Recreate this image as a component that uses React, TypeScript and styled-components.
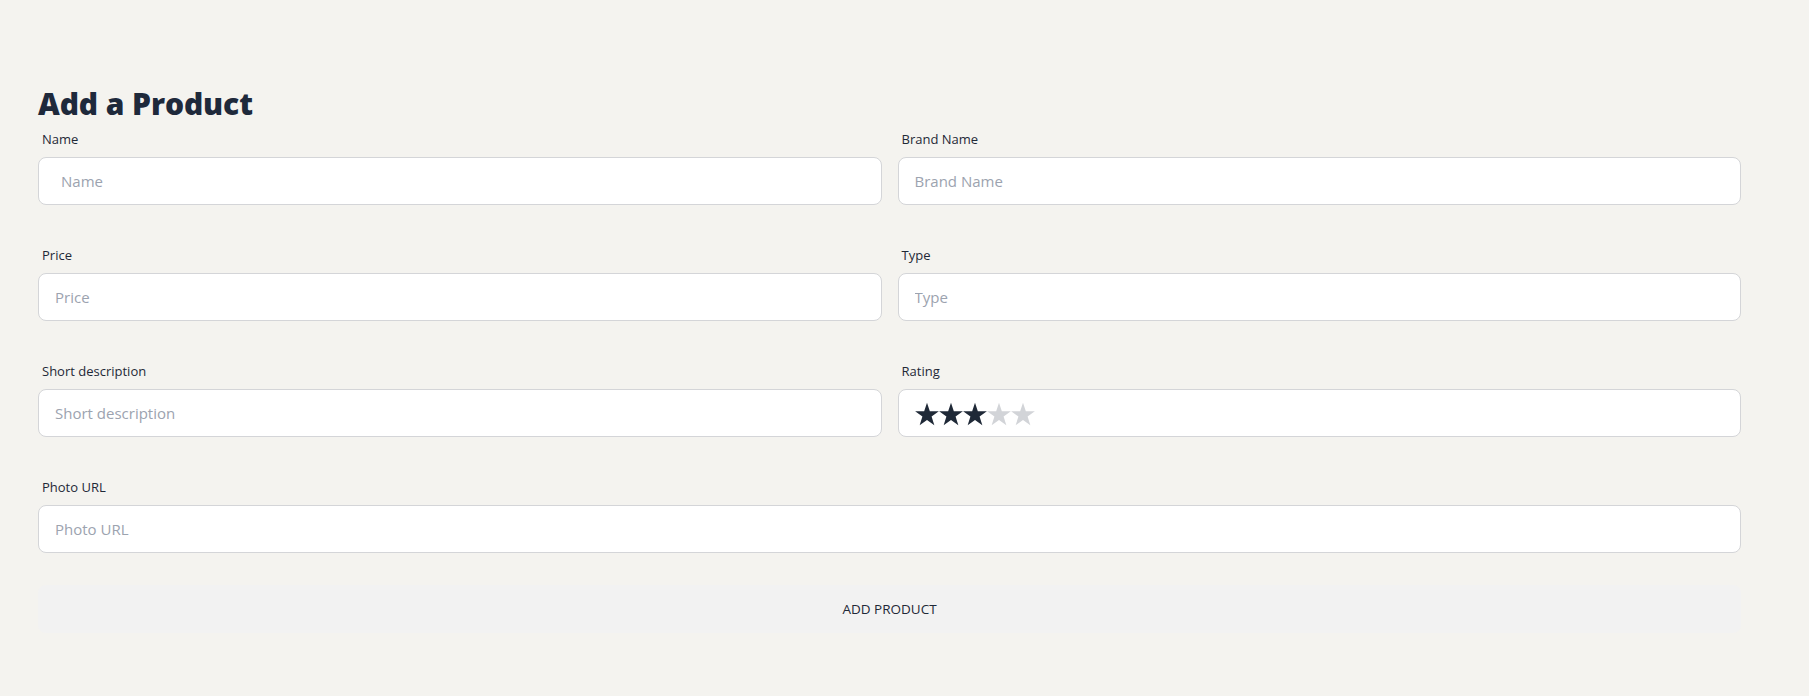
import React from "react";
import styled, { createGlobalStyle } from "styled-components";

const Global = createGlobalStyle`
  html, body { margin: 0; padding: 0; background: #f4f3ef; }
  body { font-family: "Open Sans", "Noto Sans", sans-serif; color: #1f2937; }
  * { box-sizing: border-box; }
`;

const Page = styled.div`
  padding: 86px 68px 60px 38px;
`;

const Title = styled.h1`
  margin: 0;
  font-family: "Open Sans", "Noto Sans", sans-serif;
  font-weight: 800;
  font-size: 30px;
  line-height: 35px;
  letter-spacing: -0.1px;
  color: #1e293b;
`;

const Grid = styled.form`
  display: grid;
  grid-template-columns: 1fr 1fr;
  column-gap: 16px;
  row-gap: 32px;
`;

const Field = styled.div<{ $wide?: boolean }>`
  display: flex;
  flex-direction: column;
  grid-column: ${(p) => (p.$wide ? "1 / -1" : "auto")};
`;

const Label = styled.label`
  padding: 8px 4px;
  font-size: 13px;
  line-height: 20px;
  color: #1f2937;
`;

const Input = styled.input<{ $pad?: number }>`
  height: 48px;
  width: 100%;
  padding: 0 16px 0 ${(p) => p.$pad ?? 16}px;
  border: 1px solid #d4d5d8;
  border-radius: 8px;
  background: #ffffff;
  font-family: "Open Sans", "Noto Sans", sans-serif;
  font-size: 15px;
  color: #1f2937;
  outline: none;
  &::placeholder { color: #9ca3af; }
`;

const RatingBox = styled.div`
  height: 48px;
  display: flex;
  align-items: center;
  padding: 2px 16px 0 16px;
  border: 1px solid #d4d5d8;
  border-radius: 8px;
  background: #ffffff;
`;

const StarSvg = styled.svg<{ $on: boolean }>`
  width: 24px;
  height: 24px;
  display: block;
  fill: ${(p) => (p.$on ? "#1f2937" : "#d2d4d8")};
`;

const Button = styled.button`
  grid-column: 1 / -1;
  height: 48px;
  border: none;
  border-radius: 8px;
  background: #f2f2f2;
  font-family: "Open Sans", "Noto Sans", sans-serif;
  font-size: 13.5px;
  font-weight: 500;
  text-transform: uppercase;
  color: #1f2937;
  cursor: pointer;
`;

const Star = ({ on }: { on: boolean }) => (
  <StarSvg $on={on} viewBox="0 0 192 180">
    <path d="m96 137.263-58.779 42.024 22.163-68.389L.894 68.481l72.476-.243L96 0l22.63 68.238 72.476.243-58.49 42.417 22.163 68.389z" />
  </StarSvg>
);

export default function App() {
  return (
    <>
      <Global />
      <Page>
        <Title>Add a Product</Title>
        <Grid onSubmit={(e) => e.preventDefault()}>
          <Field>
            <Label>Name</Label>
            <Input placeholder="Name" $pad={22} />
          </Field>
          <Field>
            <Label>Brand Name</Label>
            <Input placeholder="Brand Name" />
          </Field>
          <Field>
            <Label>Price</Label>
            <Input placeholder="Price" />
          </Field>
          <Field>
            <Label>Type</Label>
            <Input placeholder="Type" />
          </Field>
          <Field>
            <Label>Short description</Label>
            <Input placeholder="Short description" />
          </Field>
          <Field>
            <Label>Rating</Label>
            <RatingBox>
              {[1, 2, 3, 4, 5].map((i) => (
                <Star key={i} on={i <= 3} />
              ))}
            </RatingBox>
          </Field>
          <Field $wide>
            <Label>Photo URL</Label>
            <Input placeholder="Photo URL" />
          </Field>
          <Button type="submit">Add Product</Button>
        </Grid>
      </Page>
    </>
  );
}
